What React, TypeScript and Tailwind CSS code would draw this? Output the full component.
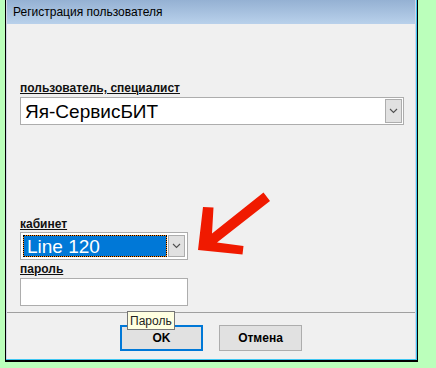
import React from "react";

const Chevron = () => (
  <svg width="9" height="6" viewBox="0 0 9 6" className="block">
    <path d="M1 1 L4.5 4.5 L8 1" fill="none" stroke="#505050" strokeWidth="1.1" />
  </svg>
);

const FieldLabel = ({ children }: { children: React.ReactNode }) => (
  <div className="h-[13px] text-[12px] leading-[13px] font-bold underline text-[#111] underline-offset-[1px]">
    {children}
  </div>
);

export default function App() {
  return (
    <div className="relative w-[436px] h-[368px] bg-[#bbffbb] font-['Liberation_Sans',Arial,sans-serif]">
      {/* window frame */}
      <div className="ml-[5px] w-[413px] h-[362px] flex flex-col border-l border-r border-b-2 border-black">
        <div className="flex-1 flex flex-col border-r border-b border-[#3ec6f2]">
          <div className="flex-1 flex flex-col border-l border-r border-[#d2d5e6]">
            {/* title bar */}
            <div className="h-[24px] flex items-center pl-[6px] bg-linear-to-b from-[#95b1d3] to-[#b9d1eb] text-[12px] text-black">
              Регистрация пользователя
            </div>

            {/* body */}
            <div className="flex-1 flex flex-col bg-[#f0f0f0] pl-[13px] pr-[11px]">
              <div className="mt-[58px]">
                <FieldLabel>пользователь, специалист</FieldLabel>
              </div>
              <div className="mt-[2px] h-[28px] flex items-center border border-[#adadad] bg-white pl-[4px] pr-[1px]">
                <span className="flex-1 text-[19px] leading-none text-black">Яя-СервисБИТ</span>
                <div className="w-[17px] h-[24px] flex items-center justify-center bg-[#e1e1e1] border border-[#adadad]">
                  <Chevron />
                </div>
              </div>

              <div className="mt-[93px]">
                <FieldLabel>кабинет</FieldLabel>
              </div>
              <div className="mt-[1px] w-[168px] h-[28px] flex items-center border border-[#adadad] bg-white p-[2px] gap-[1px]">
                <div className="flex-1 h-[22px] bg-[#ff8a1a]">
                  <div className="h-full flex items-center pl-[3px] border border-dotted border-black bg-[#0078d7] bg-clip-padding text-[19px] leading-none text-white">
                    Line 120
                  </div>
                </div>
                <div className="w-[17px] h-[22px] flex items-center justify-center bg-[#e1e1e1] border border-[#adadad]">
                  <Chevron />
                </div>
              </div>

              <div className="mt-[3px]">
                <FieldLabel>пароль</FieldLabel>
              </div>
              <div className="mt-[2px] w-[168px] h-[28px] border border-[#adadad] bg-white" />

              <div className="mt-[6px] -ml-[13px] -mr-[11px] h-[1px] bg-[#a0a0a0]" />

              <div className="mt-[12px] flex justify-center gap-[16px] -ml-[13px] -mr-[11px]">
                <button className="w-[83px] h-[26px] border-2 border-[#0078d7] bg-[#e1e1e1] text-[12px] font-bold text-black">
                  OK
                </button>
                <button className="w-[83px] h-[26px] border border-[#adadad] bg-[#e1e1e1] text-[12px] font-bold text-black">
                  Отмена
                </button>
              </div>
            </div>
          </div>
        </div>
      </div>

      {/* tooltip */}
      <div className="absolute left-[127px] top-[311px] h-[19px] px-[2px] flex items-center border border-[#767676] bg-[#ffffe1] text-[12px] text-[#222]">
        Пароль
      </div>

      {/* red arrow annotation */}
      <svg className="absolute left-0 top-0 pointer-events-none" width="436" height="368" viewBox="0 0 436 368">
        <polygon
          points="263.5,192.5 270,201 217,242.5 243.5,246 242.5,254.5 198,250 203,207 213.5,207.5 212,233.5"
          fill="#f01a00"
        />
      </svg>
    </div>
  );
}
